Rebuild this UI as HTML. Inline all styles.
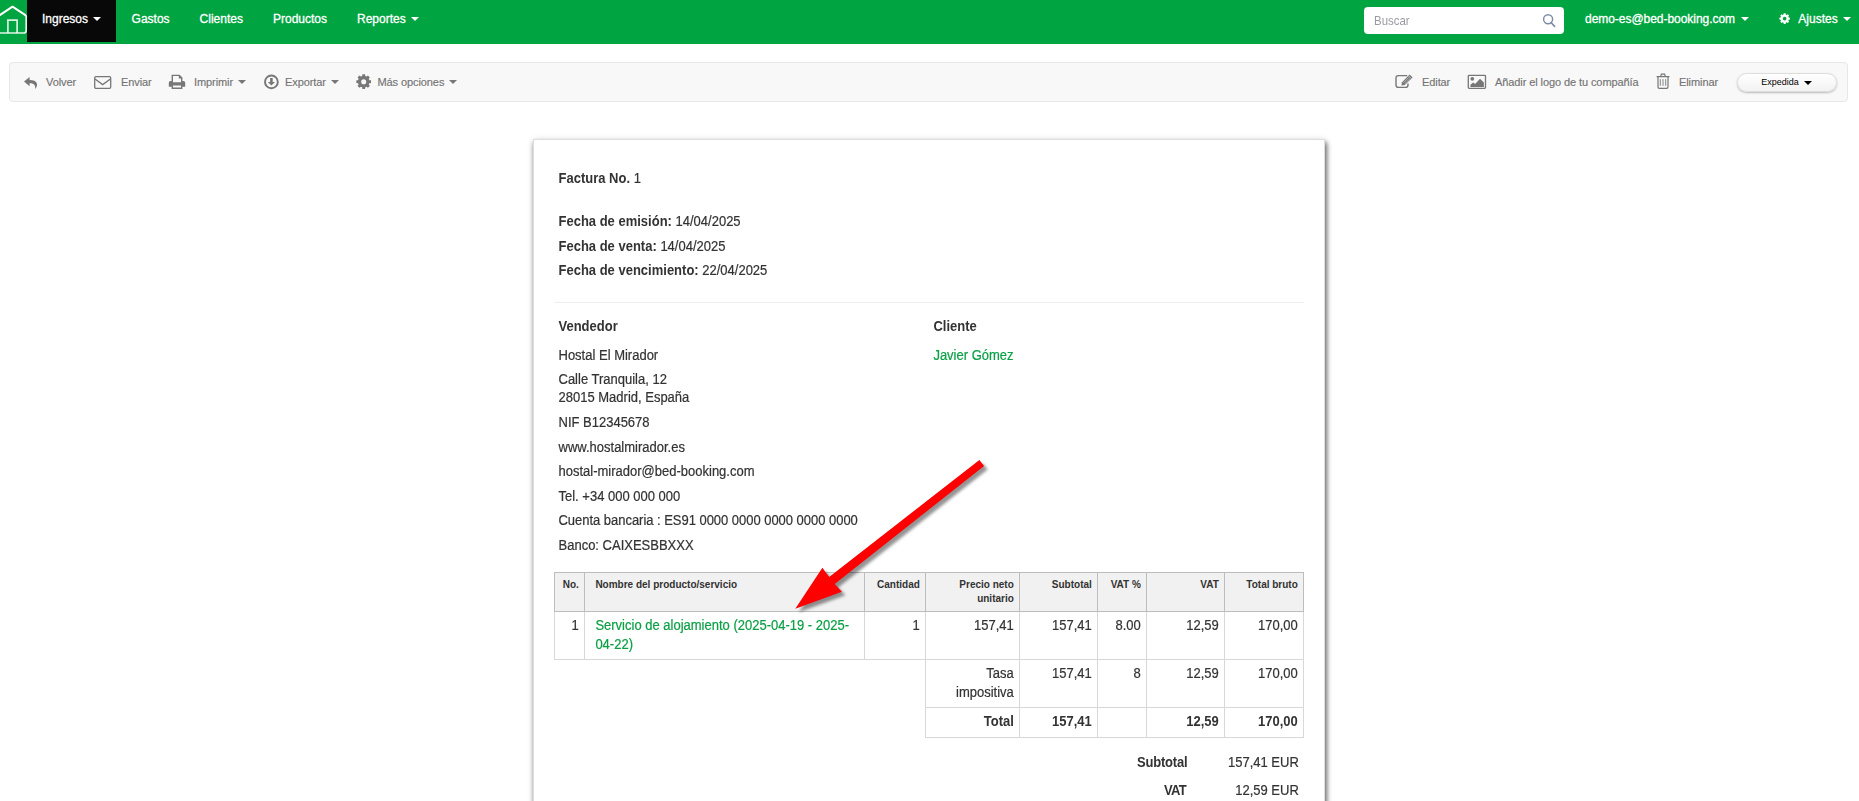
<!DOCTYPE html>
<html lang="es">
<head>
<meta charset="utf-8">
<title>Factura No. 1</title>
<style>
*{box-sizing:border-box;margin:0;padding:0}
html,body{width:1859px;height:801px;overflow:hidden;background:#fff}
body{font-family:"Liberation Sans",Arial,sans-serif;font-size:13px;color:#333;position:relative}
.abs{position:absolute;white-space:nowrap}
/* NAVBAR */
#nav{position:absolute;left:0;top:0;width:1859px;height:44px;background:#00a440}
#nav .tab{position:absolute;left:27px;top:0;width:89px;height:42px;background:#080808}
#nav .t{position:absolute;top:11px;line-height:16px;font-size:12px;color:#fff;white-space:nowrap;-webkit-text-stroke:.300px #fff}
.caret{position:absolute;width:0;height:0;border-left:4px solid transparent;border-right:4px solid transparent;border-top:4px solid #fff}
#search{position:absolute;left:1364px;top:7px;width:200px;height:27px;background:#fff;border-radius:4px}
#search span{position:absolute;left:9.700px;top:5px;font-size:13px;line-height:17px;color:#9a9aa6;transform:scaleX(.880);transform-origin:0 50%}
/* TOOLBAR */
#tb{position:absolute;left:9px;top:62px;width:1839px;height:40px;background:#f8f8f8;border:1px solid #e7e7e7;border-radius:4px}
.tt{position:absolute;top:76px;line-height:13px;font-size:11px;color:#747474;white-space:nowrap;letter-spacing:-0.09px;-webkit-text-stroke:.150px currentColor}
.tcaret{position:absolute;top:80px;width:0;height:0;border-left:4px solid transparent;border-right:4px solid transparent;border-top:4px solid #777}
.ico{position:absolute;overflow:visible}
#status{position:absolute;left:1736.500px;top:72.600px;width:100.500px;height:19.400px;border:1px solid #ddd;border-radius:10px;background:linear-gradient(#fff,#f2f2f2);box-shadow:0 1px 2px rgba(0,0,0,.25)}
#status span{position:absolute;left:23.800px;top:3.200px;font-size:9px;line-height:11px;color:#000}
#status i{position:absolute;left:66.300px;top:7.600px;width:0;height:0;border-left:4px solid transparent;border-right:4px solid transparent;border-top:4px solid #000}
/* PAPER */
#paper{position:absolute;left:533px;top:139px;width:792px;height:700px;background:#fff;border:1px solid #dedede;box-shadow:1px 4px 5px rgba(0,0,0,.42),2px 3px 5px rgba(0,0,0,.3),0 0 8px rgba(0,0,0,.08)}
.l{position:absolute;white-space:nowrap;line-height:18px;font-size:13px;color:#333;transform:scaleY(1.055);transform-origin:0 13.500px;-webkit-text-stroke:.200px currentColor}
.l b,.l.b{-webkit-text-stroke:0}
.l b,.b{font-weight:bold}
.g,#tbl td.g{color:#0a9f45}
#hr{position:absolute;left:554px;top:302px;width:750px;height:1px;background:#eee}
/* TABLE */
#tbl{position:absolute;left:554px;top:572px;border-collapse:collapse;table-layout:fixed;width:749px}
#tbl th{background:#f1f1f1;border:1px solid #bdbdbd;font-size:10px;line-height:14px;font-weight:bold;padding:5px 5.2px 4px 6px;text-align:right;vertical-align:top;height:39px;color:#333}
#tbl td{border:1px solid #d8d8d8;font-size:13px;line-height:19px;padding:4px 5.2px 5px 6px;text-align:right;vertical-align:top;color:#333}
#tbl td.n,#tbl th.n{text-align:left;padding-left:10.4px}
#tbl td.e{border:none}
#tbl td .s{display:inline-block;white-space:nowrap;line-height:19px;transform:scaleY(1.055);transform-origin:0 14px;-webkit-text-stroke:.200px currentColor}
#tbl tr.r3 td .s{-webkit-text-stroke:0}
#tbl tr.r1 td{height:48px}
#tbl tr.r2 td{height:48px}
#tbl tr.r3 td{height:30px;font-weight:bold}
</style>
</head>
<body>
<div id="nav">
  <div class="tab"></div>
  <svg class="ico" style="left:0;top:0" width="30" height="44" viewBox="0 0 30 44"><path d="M26.200 16.500 V30.400 Q26.200 33 23.600 33 H-1" fill="none" stroke="#fff" stroke-width="1.700" stroke-opacity=".88"/><path d="M7.900 33 V20.100 H17.100 V33" fill="none" stroke="#fff" stroke-width="1.700" stroke-opacity=".85"/><path d="M-1.500 16 L12.500 6.700 L25.400 15.200 Q26.200 15.800 26.200 16.800" fill="none" stroke="#fff" stroke-width="2" stroke-linejoin="round"/></svg>
  <span class="t" style="left:42px">Ingresos</span><i class="caret" style="left:93px;top:17px"></i>
  <span class="t" style="left:131.600px">Gastos</span>
  <span class="t" style="left:199.600px">Clientes</span>
  <span class="t" style="left:273px">Productos</span>
  <span class="t" style="left:357px">Reportes</span><i class="caret" style="left:411px;top:17px"></i>
  <div id="search"><span>Buscar</span>
    <svg class="ico" style="left:178px;top:6px" width="14" height="15" viewBox="0 0 14 15"><circle cx="6.100" cy="6.300" r="4.500" fill="none" stroke="#7d8aa6" stroke-width="1.450"/><path d="M9.300 9.700 L12.600 13.400" stroke="#7d8aa6" stroke-width="1.600" stroke-linecap="round"/></svg>
  </div>
  <span class="t" style="left:1585px;letter-spacing:-0.040px">demo-es@bed-booking.com</span><i class="caret" style="left:1741px;top:17px"></i>
  <svg class="ico" style="left:1778.800px;top:13.050px" width="11.300" height="11.300" viewBox="-1.05 -1.05 2.1 2.1"><path fill="#fff" fill-rule="evenodd" d="M-0.208 -0.752 L-0.179 -0.984 L0.179 -0.984 L0.208 -0.752 L0.384 -0.679 L0.569 -0.822 L0.822 -0.569 L0.679 -0.384 L0.752 -0.208 L0.984 -0.179 L0.984 0.179 L0.752 0.208 L0.679 0.384 L0.822 0.569 L0.569 0.822 L0.384 0.679 L0.208 0.752 L0.179 0.984 L-0.179 0.984 L-0.208 0.752 L-0.384 0.679 L-0.569 0.822 L-0.822 0.569 L-0.679 0.384 L-0.752 0.208 L-0.984 0.179 L-0.984 -0.179 L-0.752 -0.208 L-0.679 -0.384 L-0.822 -0.569 L-0.569 -0.822 L-0.384 -0.679Z M0.340 0 A0.340 0.340 0 1 0 -0.340 0 A0.340 0.340 0 1 0 0.340 0Z"/></svg>
  <span class="t" style="left:1798.300px">Ajustes</span><i class="caret" style="left:1843px;top:17px"></i>
</div>

<div id="tb"></div>
<!-- toolbar left -->
<svg class="ico" style="left:24px;top:77px" width="14" height="12" viewBox="0 0 14 12"><path fill="#777" d="M5.6 0 L0 4.6 L5.6 9.2 V6.3 C9.6 6.3 11.6 7.6 11.2 12 C14.6 8 13.6 2.9 5.6 2.9Z"/></svg>
<span class="tt" style="left:46px">Volver</span>
<svg class="ico" style="left:94px;top:76px" width="18" height="13" viewBox="0 0 18 13"><rect x=".7" y=".7" width="16" height="11.6" rx="1.3" fill="none" stroke="#777" stroke-width="1.3"/><path d="M1 3 L8.7 8.6 L16.4 3" fill="none" stroke="#777" stroke-width="1.3"/></svg>
<span class="tt" style="left:121px">Enviar</span>
<svg class="ico" style="left:168px;top:74px" width="18" height="16" viewBox="0 0 18 16"><path fill="#777" fill-rule="evenodd" d="M3.6 0.7 H11.6 L14.4 3.4 V7 H15.6 Q17.2 7 17.2 8.8 V12.8 H14.4 V15 H3.6 V12.8 H0.8 V8.8 Q0.8 7 2.4 7 H3.6Z M5 2 V8.2 H13 V4.4 H10.8 V2Z M5 11.4 V13.6 H13 V11.4Z"/></svg>
<span class="tt" style="left:194px">Imprimir</span><i class="tcaret" style="left:238px"></i>
<svg class="ico" style="left:264px;top:74px" width="16" height="16" viewBox="0 0 16 16"><circle cx="7.400" cy="7.900" r="6.400" fill="none" stroke="#777" stroke-width="1.900"/><path fill="#777" d="M6.100 4.100 H8.700 V8 H11 L7.400 11.600 L3.800 8 H6.100Z"/></svg>
<span class="tt" style="left:285px">Exportar</span><i class="tcaret" style="left:331px"></i>
<svg class="ico" style="left:356.4px;top:74.2px" width="15.4" height="15.4" viewBox="-1.03 -1.03 2.06 2.06"><path fill="#777" fill-rule="evenodd" d="M-0.208 -0.752 L-0.179 -0.984 L0.179 -0.984 L0.208 -0.752 L0.384 -0.679 L0.569 -0.822 L0.822 -0.569 L0.679 -0.384 L0.752 -0.208 L0.984 -0.179 L0.984 0.179 L0.752 0.208 L0.679 0.384 L0.822 0.569 L0.569 0.822 L0.384 0.679 L0.208 0.752 L0.179 0.984 L-0.179 0.984 L-0.208 0.752 L-0.384 0.679 L-0.569 0.822 L-0.822 0.569 L-0.679 0.384 L-0.752 0.208 L-0.984 0.179 L-0.984 -0.179 L-0.752 -0.208 L-0.679 -0.384 L-0.822 -0.569 L-0.569 -0.822 L-0.384 -0.679Z M0.340 0 A0.340 0.340 0 1 0 -0.340 0 A0.340 0.340 0 1 0 0.340 0Z"/></svg>
<span class="tt" style="left:377.500px">Más opciones</span><i class="tcaret" style="left:449px"></i>
<!-- toolbar right -->
<svg class="ico" style="left:1395px;top:74px" width="19" height="15" viewBox="0 0 19 15"><path d="M12.2 1.6 H3.4 Q1 1.600 1 4 V11 Q1 13.400 3.400 13.400 H10.600 Q13 13.400 13 11 V9.5" fill="none" stroke="#777" stroke-width="1.400"/><path fill="#777" d="M14.600 0.500 L17.600 3.400 L9.800 11 L6.400 11.600 L7 8.200Z"/><path d="M8.300 8.700 L13.700 3.400 M9.600 9.900 L15 4.600" stroke="#f8f8f8" stroke-opacity=".6" stroke-width=".7" fill="none"/><path d="M13.500 1.800 L16.400 4.700" stroke="#f8f8f8" stroke-opacity=".8" stroke-width=".7" fill="none"/></svg>
<span class="tt" style="left:1422px">Editar</span>
<svg class="ico" style="left:1467px;top:74px" width="20" height="16" viewBox="0 0 20 16"><rect x="1.300" y="1.300" width="17.200" height="13" rx="0.800" fill="none" stroke="#777" stroke-width="1.300"/><circle cx="5.300" cy="4.800" r="1.850" fill="#777"/><path fill="#777" d="M3.400 13 V10.800 L6.200 8.400 L8.100 10.100 L13 4.800 L16.900 8.500 V13Z"/></svg>
<span class="tt" style="left:1495px">Añadir el logo de tu compañía</span>
<svg class="ico" style="left:1656px;top:73px" width="14" height="17" viewBox="0 0 14 17"><path d="M0.600 3.600 H13.400 M4.600 3.400 L5.400 1.200 H8.600 L9.400 3.400 M2 3.800 V14 Q2 15.400 3.400 15.400 H10.600 Q12 15.400 12 14 V3.800 " fill="none" stroke="#777" stroke-width="1.200"/><path d="M4.300 6.200 V12.800 M7 6.200 V12.800 M9.700 6.200 V12.800" fill="none" stroke="#777" stroke-width=".900"/></svg>
<span class="tt" style="left:1679px">Eliminar</span>
<div id="status"><span>Expedida</span><i></i></div>

<div id="paper"></div>
<div class="l" style="left:558.5px;top:170px"><b>Factura No.</b> 1</div>
<div class="l" style="left:558.5px;top:213px"><b>Fecha de emisión:</b> 14/04/2025</div>
<div class="l" style="left:558.5px;top:238px"><b>Fecha de venta:</b> 14/04/2025</div>
<div class="l" style="left:558.5px;top:262px"><b>Fecha de vencimiento:</b> 22/04/2025</div>
<div id="hr"></div>
<div class="l b" style="left:558.5px;top:318px">Vendedor</div>
<div class="l b" style="left:933.400px;top:318px">Cliente</div>
<div class="l" style="left:558.5px;top:347px">Hostal El Mirador</div>
<div class="l g" style="left:933.400px;top:347px">Javier Gómez</div>
<div class="l" style="left:558.5px;top:371px">Calle Tranquila, 12</div>
<div class="l" style="left:558.5px;top:389px">28015 Madrid, España</div>
<div class="l" style="left:558.5px;top:414px">NIF B12345678</div>
<div class="l" style="left:558.5px;top:439px">www.hostalmirador.es</div>
<div class="l" style="left:558.5px;top:463px">hostal-mirador@bed-booking.com</div>
<div class="l" style="left:558.5px;top:488px">Tel. +34 000 000 000</div>
<div class="l" style="left:558.5px;top:512px;letter-spacing:-0.030px">Cuenta bancaria : ES91 0000 0000 0000 0000 0000</div>
<div class="l" style="left:558.5px;top:537px">Banco: CAIXESBBXXX</div>

<table id="tbl">
<colgroup><col style="width:30px"><col style="width:280px"><col style="width:61px"><col style="width:94px"><col style="width:78px"><col style="width:49px"><col style="width:78px"><col style="width:79px"></colgroup>
<tr><th>No.</th><th class="n">Nombre del producto/servicio</th><th>Cantidad</th><th>Precio neto unitario</th><th>Subtotal</th><th>VAT %</th><th>VAT</th><th>Total bruto</th></tr>
<tr class="r1"><td><span class="s">1</span></td><td class="n g"><span class="s">Servicio de alojamiento (2025-04-19 - 2025-</span><br><span class="s">04-22)</span></td><td><span class="s">1</span></td><td><span class="s">157,41</span></td><td><span class="s">157,41</span></td><td><span class="s">8.00</span></td><td><span class="s">12,59</span></td><td><span class="s">170,00</span></td></tr>
<tr class="r2"><td class="e"></td><td class="e"></td><td class="e"></td><td><span class="s">Tasa</span><br><span class="s">impositiva</span></td><td><span class="s">157,41</span></td><td><span class="s">8</span></td><td><span class="s">12,59</span></td><td><span class="s">170,00</span></td></tr>
<tr class="r3"><td class="e"></td><td class="e"></td><td class="e"></td><td><span class="s">Total</span></td><td><span class="s">157,41</span></td><td></td><td><span class="s">12,59</span></td><td><span class="s">170,00</span></td></tr>
</table>

<div class="l b" style="right:671.600px;top:754px;letter-spacing:-0.200px">Subtotal</div>
<div class="l" style="right:560.200px;top:754px">157,41 EUR</div>
<div class="l b" style="left:1164px;top:782px;letter-spacing:-0.750px">VAT</div>
<div class="l" style="right:560.200px;top:782px">12,59 EUR</div>

<!-- red arrow annotation -->
<svg class="ico" style="left:0;top:0;pointer-events:none" width="1859" height="801" viewBox="0 0 1859 801">
  <defs><filter id="ash" x="-10%" y="-10%" width="125%" height="125%"><feGaussianBlur stdDeviation="1.800"/></filter></defs>
  <path transform="translate(3.500,3.500)" filter="url(#ash)" fill="#000" fill-opacity=".42" d="M979.400 460 L984.100 465.900 L834.700 584.100 L841.900 591.700 L795.300 608.700 L822.400 567.700 L829.200 576.900Z"/>
  <path fill="#ff0000" d="M979.400 460 L984.100 465.900 L834.700 584.100 L841.900 591.700 L795.300 608.700 L822.400 567.700 L829.200 576.900Z"/>
</svg>
</body>
</html>
